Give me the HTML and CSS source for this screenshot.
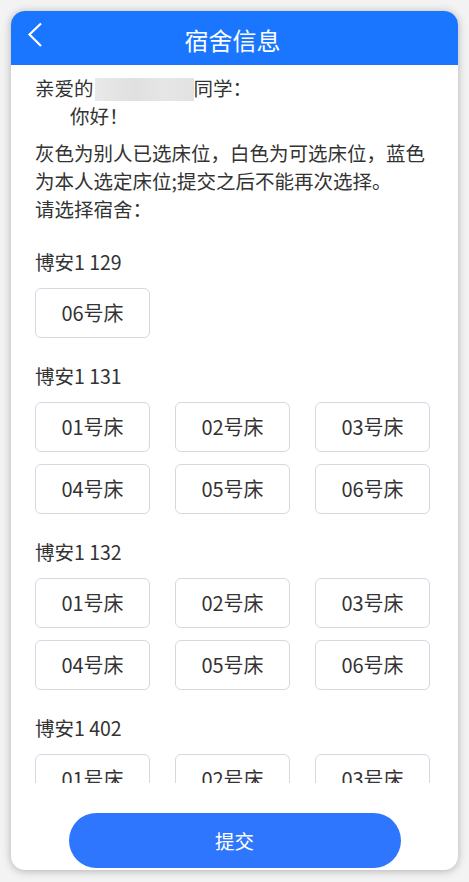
FILE: index.html
```html
<!DOCTYPE html>
<html lang="zh-CN">
  <head>
    <meta charset="UTF-8" />
    <meta name="viewport" content="width=device-width, initial-scale=1.0" />
    <title>宿舍信息</title>
    <link rel="stylesheet" href="styles.css">
  </head>
  <body>
    <div class="phone">
      <div class="header">
        <span class="back">
          <svg width="16" height="26" viewBox="0 0 16 26">
            <path d="M14 1.5 L2.5 12.5 L14 24" fill="none" stroke="#fff" stroke-width="2.2" />
          </svg>
        </span>
        <h1>宿舍信息</h1>
      </div>

      <div class="content">
        <p class="greet">亲爱的<span class="name"></span>同学：<br /><span class="indent">你好！</span></p>
        <p class="intro">
          灰色为别人已选床位，白色为可选床位，蓝色为本人选定床位;提交之后不能再次选择。<br />请选择宿舍：
        </p>

        <div class="room">
          <div class="room-title">博安1 129</div>
          <div class="beds">
            <div class="bed">06号床</div>
          </div>
        </div>

        <div class="room">
          <div class="room-title">博安1 131</div>
          <div class="beds">
            <div class="bed">01号床</div>
            <div class="bed">02号床</div>
            <div class="bed">03号床</div>
            <div class="bed">04号床</div>
            <div class="bed">05号床</div>
            <div class="bed">06号床</div>
          </div>
        </div>

        <div class="room">
          <div class="room-title">博安1 132</div>
          <div class="beds">
            <div class="bed">01号床</div>
            <div class="bed">02号床</div>
            <div class="bed">03号床</div>
            <div class="bed">04号床</div>
            <div class="bed">05号床</div>
            <div class="bed">06号床</div>
          </div>
        </div>

        <div class="room">
          <div class="room-title">博安1 402</div>
          <div class="beds">
            <div class="bed">01号床</div>
            <div class="bed">02号床</div>
            <div class="bed">03号床</div>
          </div>
        </div>
      </div>

      <div class="footer">
        <button class="submit">提交</button>
      </div>
    </div>
  </body>
</html>
```

FILE: styles.css
```css
body {
  margin: 0;
  padding: 11px;
  background: #f3f3f3;
  font-family: 'Noto Sans CJK SC', 'Noto Sans', sans-serif;
  color: #333;
}

.phone {
  width: 447px;
  height: 859px;
  background: #fff;
  border-radius: 14px;
  overflow: hidden;
  box-shadow: 0 1px 8px rgba(0, 0, 0, 0.28);
  display: flex;
  flex-direction: column;
}

.header {
  height: 54px;
  flex: none;
  background: #1a76ff;
  display: flex;
  align-items: center;
  justify-content: center;
  position: relative;
}

.header h1 {
  margin: 0 4px 0 0;
  font-size: 24px;
  font-weight: normal;
  color: #fff;
  line-height: 1;
  padding-top: 3px;
}

.back {
  position: absolute;
  left: 16px;
  top: 11px;
  display: flex;
}

.content {
  flex: 1;
  overflow: hidden;
  padding: 9px 28px 0 24px;
  font-size: 19.5px;
  line-height: 28px;
}

.content p {
  margin: 0;
}

.intro {
  margin-top: 9px !important;
  margin-right: -4px !important;
}

.name {
  display: inline-block;
  width: 99px;
  height: 23px;
  margin-left: 1px;
  vertical-align: -5px;
  background: linear-gradient(90deg, #e9e9e9, #e0e0e0 40%, #e6e6e6 70%, #e2e2e2);
}

.indent {
  padding-left: 35px;
}

.room {
  margin-top: 25px;
}

.room + .room {
  margin-top: 24px;
}

.beds {
  margin-top: 12px;
  display: grid;
  grid-template-columns: repeat(3, 1fr);
  column-gap: 25px;
  row-gap: 12px;
}

.bed {
  height: 50px;
  box-sizing: border-box;
  border: 1px solid #d3d9e3;
  border-radius: 6px;
  display: flex;
  align-items: center;
  justify-content: center;
  font-size: 20px;
}

.footer {
  height: 87px;
  flex: none;
  box-sizing: border-box;
  padding-top: 30px;
  display: flex;
  justify-content: center;
}

.submit {
  width: 332px;
  height: 55px;
  border: none;
  border-radius: 28px;
  background: #2e76fe;
  color: #fff;
  font-family: inherit;
  font-size: 19.5px;
}
```
